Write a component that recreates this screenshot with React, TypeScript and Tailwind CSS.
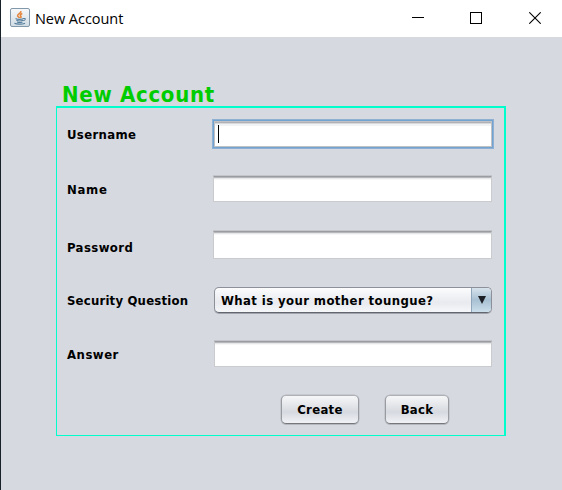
import type { ReactNode } from 'react';

const labelFont = "font-['DejaVu_Sans_Condensed','DejaVu_Sans',sans-serif] font-bold text-black whitespace-nowrap";

function JavaIcon() {
  return (
    <svg width="20" height="20" viewBox="0 0 20 20" fill="none" className="-mt-px">
      <defs>
        <linearGradient id="tile" x1="0" y1="0" x2="0" y2="1">
          <stop offset="0" stopColor="#f7f8f9" />
          <stop offset="1" stopColor="#cfdbe3" />
        </linearGradient>
      </defs>
      <rect x="0.5" y="0.5" width="19" height="18" rx="1.5" fill="url(#tile)" stroke="#8199ab" />
      <path d="M10.800 3c1 2-3.500 3-3.200 4.800.2.900 1.500 1.300 1.700 2.200M12.300 5.500c-2 .8-2.400 1.800-1.500 2.700.5.600.1 1.300-.5 1.800" stroke="#e5873f" strokeWidth="1.600" />
      <path d="M5.500 10.500c2 .9 6 .9 8 0M6.300 12.300c2 .8 4.700.8 6.700 0M7 13.900c1.500.7 4 .7 5.500 0M13.500 10.500c2.500-.5 2.200 1.800-.3 2.300M4.500 15.200c2 1.200 8 1.200 10.500 0" stroke="#557e9d" strokeWidth="1.100" />
    </svg>
  );
}

function TitleBar() {
  return (
    <header className="flex h-[37px] items-center bg-white pl-[9px] text-black">
      <JavaIcon />
      <span className="ml-[5px] w-[100px] whitespace-nowrap font-['Open_Sans','Noto_Sans',sans-serif] text-[14.5px] tracking-[-0.05px]">
        New Account
      </span>
      <div className="ml-auto flex items-center pr-[21px]">
        <svg width="12" height="12" className="-mt-px mr-[46px]" shapeRendering="crispEdges">
          <path d="M0 5.500H12" stroke="#000" />
        </svg>
        <svg width="12" height="12" className="-mt-px mr-[47px]" shapeRendering="crispEdges">
          <rect x="0.5" y="0.5" width="11" height="11" fill="none" stroke="#000" />
        </svg>
        <svg width="12" height="12" className="-mt-px">
          <path d="M.3.3L11.700 11.700M11.700.3L.3 11.700" stroke="#000" strokeWidth="1.100" />
        </svg>
      </div>
    </header>
  );
}

function Row({ label, className, labelClass, children }: { label: string; className: string; labelClass: string; children: ReactNode }) {
  return (
    <div className={`flex items-start ${className}`}>
      <span className={`${labelFont} w-[146px] shrink-0 text-[13px] leading-[16px] ${labelClass}`}>{label}</span>
      {children}
    </div>
  );
}

const fieldBase =
  'border border-[#cacbcd] border-t-[#9b9ca1] bg-white shadow-[inset_0_1px_0_#b6b7ba,inset_0_2px_0_#e6e7e8,inset_0_3px_0_#f7f7f7,0_-1px_0_#c3c5cb]';

function Button({ className, children }: { className: string; children: ReactNode }) {
  return (
    <button
      className={`${labelFont} flex items-center justify-center rounded-[5px] border-[1.5px] border-[#999ba1] border-t-[#aeb0b5] border-b-[#75777c] bg-linear-to-b from-[#f6f7f8] via-[#d6d9df] via-60% to-[#f0f2f6] text-[13px] leading-[16px] shadow-[0_1px_0_#b5b8be,0_0_0_0.5px_#b5b8be] ${className}`}
    >
      {children}
    </button>
  );
}

export default function App() {
  return (
    <div className="h-[490px] w-[562px] overflow-hidden border-l border-[#18202a] bg-[#d6d9e0]">
      <TitleBar />
      <main className="pl-[55px] pt-[44px]">
        <h1 className="h-[25px] whitespace-nowrap pl-[6px] font-['DejaVu_Sans_Condensed','DejaVu_Sans',sans-serif] text-[22px] font-bold leading-[27px] tracking-[0.7px] text-[#00cc00]">
          New Account
        </h1>
        <section className="h-[330px] w-[450px] border-b border-l border-r-2 border-t-2 border-[#00ffcc] pl-[10px]">
          <Row label="Username" className="h-[57px] pt-[11px]" labelClass="mt-[8px] tracking-[0.35px]">
            <div className="-ml-px h-[30px] w-[282px] border-2 border-[#8fb0d2] bg-white p-[2px] shadow-[inset_0_0_0_1px_#bfc1c5,inset_0_2px_0_#b0b2b6,inset_0_3px_0_#d8d9dc,inset_0_5px_0_#f2f3f4] outline outline-1 -outline-offset-2 outline-[#73a4d1]">
              <div className="ml-[2px] mt-[2px] h-[18px] w-px bg-black" />
            </div>
          </Row>
          <Row label="Name" className="h-[55px] pt-[11px]" labelClass="mt-[6px] tracking-[0.7px]">
            <div className={`h-[26px] w-[279px] ${fieldBase}`} />
          </Row>
          <Row label="Password" className="h-[56px] pt-[11px]" labelClass="mt-[9px] tracking-[0.4px]">
            <div className={`h-[28px] w-[279px] ${fieldBase}`} />
          </Row>
          <Row label="Security Question" className="h-[53px] pt-[11px]" labelClass="mt-[6px] tracking-[0.2px]">
            <div className="ml-px flex h-[26px] w-[278px] overflow-hidden rounded-[5px] border border-[#8d9099] border-b-[#63666e] bg-linear-to-b from-[#fcfcfd] via-[#e8eaef] via-60% to-[#f6f7f9] shadow-[0_1px_0_#a0a3ab]">
              <span className={`${labelFont} grow pl-[6px] pt-[5px] text-[13px] leading-[16px] tracking-[0.4px]`}>
                What is your mother toungue?
              </span>
              <span className="flex w-[20px] items-center justify-center border-l border-[#8fa6bb] bg-linear-to-b from-[#d8e3ec] via-[#a8c0d3] to-[#cbdfeb]">
                <svg width="8" height="8" className="-mt-px">
                  <path d="M0 0H8L4 8Z" fill="#1c2026" />
                </svg>
              </span>
            </div>
          </Row>
          <Row label="Answer" className="h-[53px] pt-[12px]" labelClass="mt-[6px] tracking-[0.5px]">
            <div className={`ml-px h-[26px] w-[278px] ${fieldBase}`} />
          </Row>
          <div className="flex gap-[26px] pl-[214px] pt-[13px]">
            <Button className="h-[29px] w-[78px] tracking-[0.3px]">Create</Button>
            <Button className="h-[29px] w-[64px] tracking-[0.3px]">Back</Button>
          </div>
        </section>
      </main>
    </div>
  );
}
